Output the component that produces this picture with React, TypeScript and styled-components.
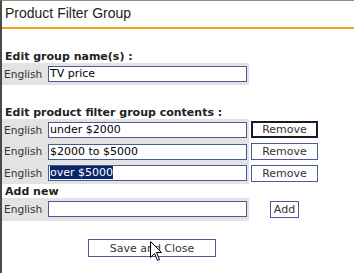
import React from "react";
import styled, { createGlobalStyle } from "styled-components";

const GlobalStyle = createGlobalStyle`
  html, body { margin: 0; padding: 0; background: #ffffff; }
  * { box-sizing: border-box; }
`;

const Panel = styled.div`
  position: relative;
  height: 273px;
  border-left: 2px solid #4a4a4a;
  border-top: 1px solid #8f8f80;
  font-family: "DejaVu Sans", Verdana, sans-serif;
  font-size: 11px;
  color: #333;
  overflow: hidden;
`;

const Header = styled.div`
  height: 28px;
  padding: 4px 0 0 3px;
  font-family: "Liberation Sans", Arial, sans-serif;
  font-size: 14px;
  line-height: 16px;
  color: #222;
  border-bottom: 2px solid #f0a31a;
`;

const SectionTitle = styled.h3<{ $gap: number }>`
  margin: ${(p) => p.$gap}px 0 0 0;
  padding-left: 3px;
  font-size: 11px;
  line-height: 13px;
  font-weight: bold;
  color: #222;
`;

const Row = styled.div`
  display: flex;
  align-items: center;
  gap: 2px;
`;

const GrayCell = styled.div<{ $padTop: number; $padBottom: number }>`
  display: flex;
  align-items: center;
  width: 247px;
  padding: ${(p) => p.$padTop}px 2px ${(p) => p.$padBottom}px 2px;
  background: #e3e3e3;
`;

const Label = styled.span`
  width: 44px;
  font-size: 10.6px;
  line-height: 13px;
  color: #333;
`;

const Field = styled.div`
  width: 199px;
  height: 16px;
  border: 1px solid #4a5a98;
  background: #fff;
  padding: 0 1px;
  line-height: 14px;
  color: #000;
  white-space: nowrap;
`;

const Selected = styled.span`
  background: #0a246a;
  color: #fff;
`;

const Button = styled.button<{ $width: number; $focused?: boolean }>`
  width: ${(p) => p.$width}px;
  height: 17px;
  margin: 0;
  padding: 0;
  background: #fff;
  border: ${(p) => (p.$focused ? "2px solid #1a1a2a" : "1px solid #4a5a98")};
  font-family: "DejaVu Sans", Verdana, sans-serif;
  font-size: 11px;
  line-height: 13px;
  color: #333;
`;

const AddButton = styled(Button)`
  margin-left: 19px;
`;

const Footer = styled.div`
  display: flex;
  padding-left: 86px;
  margin-top: 18px;
`;

const SaveButton = styled(Button)`
  height: 18px;
`;

const Cursor = styled.svg`
  position: absolute;
  left: 148px;
  top: 240px;
`;

export default function App() {
  const items = ["under $2000", "$2000 to $5000"];
  return (
    <>
      <GlobalStyle />
      <Panel>
        <Header>Product Filter Group</Header>

        <SectionTitle $gap={21}>Edit group name(s) :</SectionTitle>
        <Row>
          <GrayCell $padTop={3} $padBottom={3}>
            <Label>English</Label>
            <Field>TV price</Field>
          </GrayCell>
        </Row>

        <SectionTitle $gap={21}>Edit product filter group contents :</SectionTitle>
        {items.map((v, i) => (
          <Row key={v}>
            <GrayCell $padTop={3} $padBottom={2.5}>
              <Label>English</Label>
              <Field>{v}</Field>
            </GrayCell>
            <Button $width={67} $focused={i === 0}>Remove</Button>
          </Row>
        ))}
        <Row>
          <GrayCell $padTop={3} $padBottom={3}>
            <Label>English</Label>
            <Field>
              <Selected>over $5000</Selected>
            </Field>
          </GrayCell>
          <Button $width={67}>Remove</Button>
        </Row>

        <SectionTitle $gap={1}>Add new</SectionTitle>
        <Row>
          <GrayCell $padTop={3} $padBottom={4}>
            <Label>English</Label>
            <Field />
          </GrayCell>
          <AddButton $width={29}>Add</AddButton>
        </Row>

        <Footer>
          <SaveButton $width={128}>Save and Close</SaveButton>
        </Footer>

        <Cursor width="13" height="21" viewBox="0 0 13 21">
          <path
            d="M0.5 0.5 L0.5 16.5 L4.5 12.5 L7.5 19.5 L9.5 18.5 L6.5 11.5 L11.5 11.5 Z"
            fill="#fff"
            stroke="#000"
            strokeWidth="1"
          />
        </Cursor>
      </Panel>
    </>
  );
}
